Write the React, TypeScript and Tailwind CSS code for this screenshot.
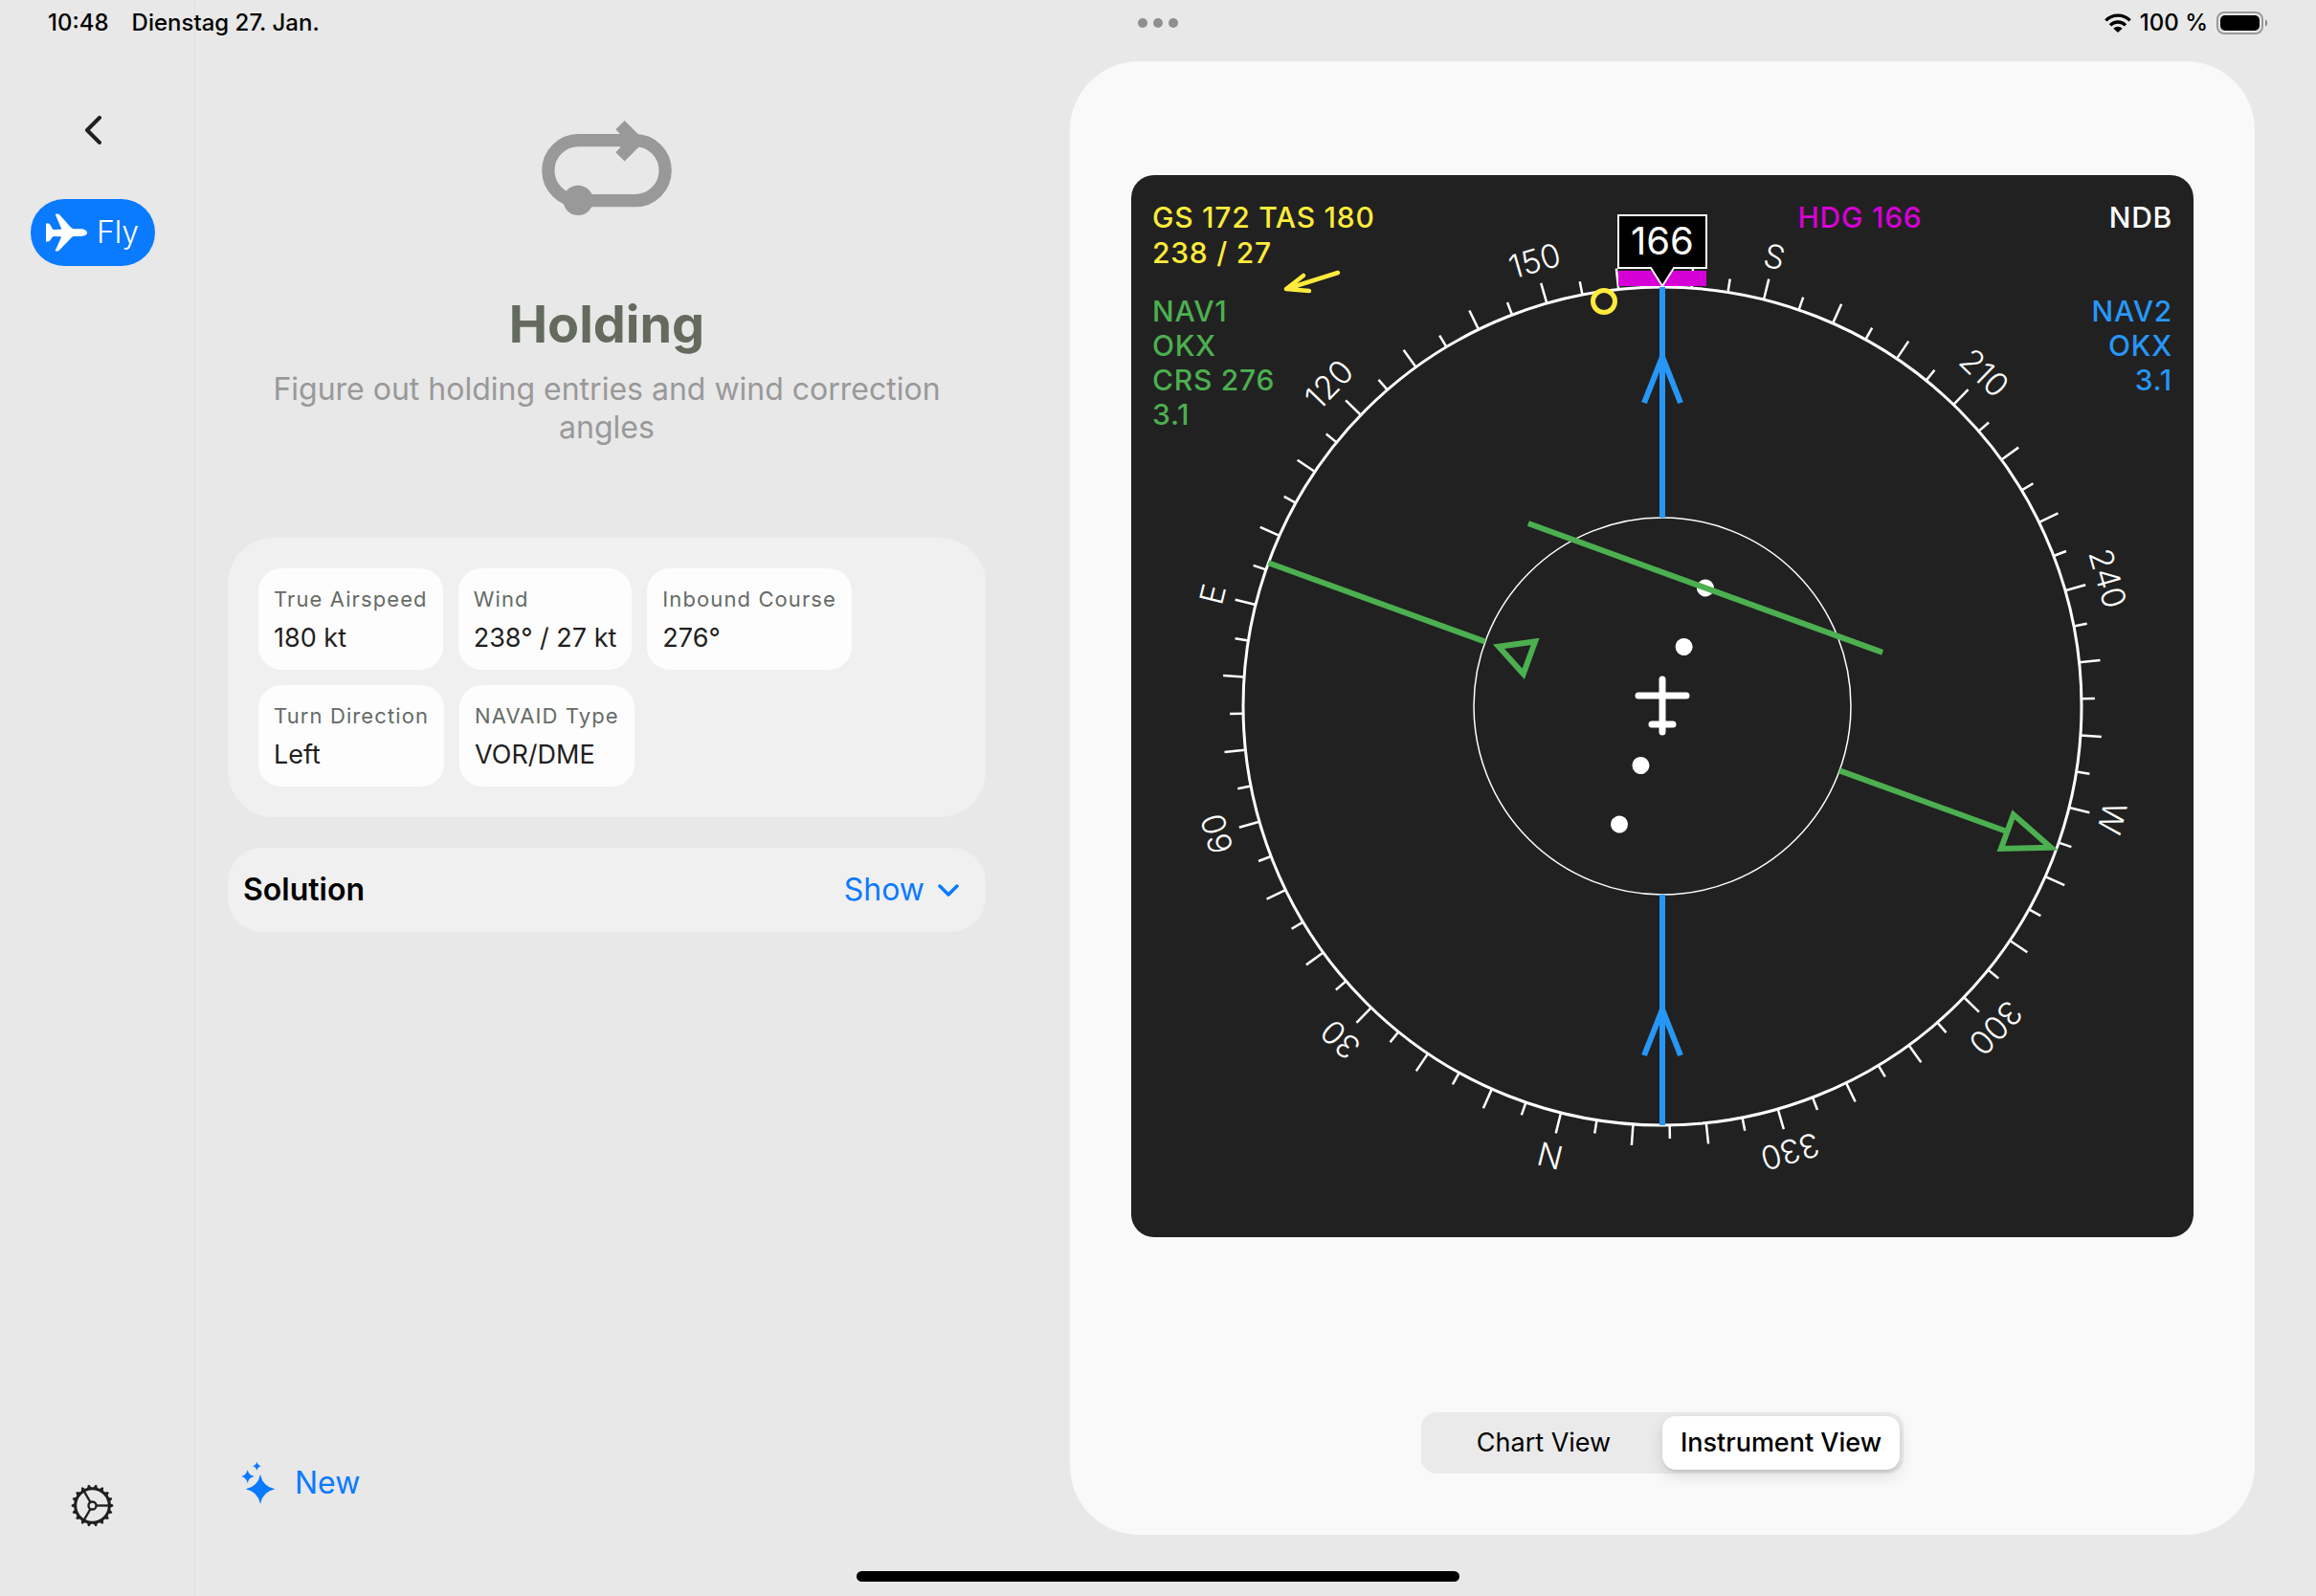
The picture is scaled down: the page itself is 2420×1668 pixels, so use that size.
import { useState } from "react";
import { clsx } from "clsx";

const parameters = [
  { label: "True Airspeed", value: "180 kt" },
  { label: "Wind", value: "238° / 27 kt" },
  { label: "Inbound Course", value: "276°" },
  { label: "Turn Direction", value: "Left" },
  { label: "NAVAID Type", value: "VOR/DME" },
];

const views = ["Chart View", "Instrument View"];

// Instrument geometry, in viewBox units
const C = 555;
const OUTER_R = 438;
const INNER_R = 197;
const HEADING = 166;
const COURSE = 276;

const roseLabels: Record<number, string> = { 0: "N", 90: "E", 180: "S", 270: "W" };

function StatusBar() {
  return (
    <header className="absolute inset-x-0 top-0 flex h-12 items-center justify-between px-[50px] text-2xl font-medium text-black">
      <div className="flex flex-1 gap-6">
        <span>10:48</span>
        <span>Dienstag 27. Jan.</span>
      </div>
      <div className="flex gap-[6px]">
        <span className="size-[10px] rounded-full bg-[#8f8f8f]" />
        <span className="size-[10px] rounded-full bg-[#8f8f8f]" />
        <span className="size-[10px] rounded-full bg-[#8f8f8f]" />
      </div>
      <div className="flex flex-1 items-center justify-end gap-[9px]">
        <svg className="h-5 w-7" viewBox="0 0 84 60" fill="none" stroke="#000" strokeWidth="10">
          <path d="M4 22a54 54 0 0 1 76 0" />
          <path d="M18 37a34 34 0 0 1 48 0" />
          <path d="M42 60 28 47a20 20 0 0 1 28 0z" fill="#000" stroke="none" />
        </svg>
        <span>100 %</span>
        <svg className="h-6 w-[54px]" viewBox="0 0 54 24" fill="none">
          <rect x="1" y="1" width="47" height="22" rx="7" stroke="#9a9a9a" strokeWidth="2" />
          <rect x="4" y="4" width="41" height="16" rx="5" fill="#000" />
          <path d="M51 8.500c3 1 3 6 0 7z" fill="#8a8a8a" />
        </svg>
      </div>
    </header>
  );
}

function PlaneIcon() {
  return (
    <svg className="h-10 w-[43px]" viewBox="147 668 130 120" fill="currentColor">
      <path d="M277 729c0 6-8 11-20 11h-20c-5 0-8 2-10 5l-37 38q-3 4-8 4h-3q-3 0-2-3l18-40q1-3-2-3l-20-1q-4 0-6 3l-7 10q-2 4-6 4h-7v-58h7q4 0 6 4l7 12q2 4 6 4l20-1q4 0 2-4l-17-40q-2-5 2-5h3q5 0 8 4l33 37q6 7 14 7h19c12 0 20 6 20 12z" />
    </svg>
  );
}

function GearIcon() {
  const teeth = Array.from({ length: 18 }, (_, i) => i * 20);
  return (
    <svg className="size-[45px]" viewBox="-67 -67 134 134" fill="none" stroke="currentColor">
      <circle r="53" strokeWidth="9" />
      <circle r="12" strokeWidth="7" />
      {[0, 120, 240].map((a) => (
        <path key={a} d="M13 0H52" strokeWidth="7" transform={`rotate(${a})`} />
      ))}
      {teeth.map((a) => (
        <path key={a} d="M55-7 64-3q3 3 0 6L55 7z" fill="currentColor" stroke="none" transform={`rotate(${a})`} />
      ))}
    </svg>
  );
}

function star(x: number, y: number, r: number) {
  const k = r * 0.17;
  return `M${x} ${y - r}Q${x + k} ${y - k} ${x + r} ${y}Q${x + k} ${y + k} ${x} ${y + r}Q${x - k} ${y + k} ${x - r} ${y}Q${x - k} ${y - k} ${x} ${y - r}z`;
}

function SparklesIcon() {
  return (
    <svg className="h-11 w-9" viewBox="755 141 108 132" fill="currentColor">
      <path d={star(815, 226, 46)} />
      <path d={star(775, 186, 21)} />
      <path d={star(804, 154, 14)} />
    </svg>
  );
}

function HoldingIcon() {
  return (
    <svg className="h-[99px] w-[136px] text-[#999999]" viewBox="138 78 408 298">
      <rect x="158" y="140" width="368" height="190" rx="95" fill="none" stroke="currentColor" strokeWidth="40" />
      <circle cx="252" cy="329" r="47" fill="currentColor" />
      <path d="M398 78l64 64-64 64-28-28 14-14v-44l-14-14z" fill="currentColor" />
    </svg>
  );
}

function Sidebar() {
  return (
    <nav className="flex w-[204px] shrink-0 flex-col items-center border-r border-[#dedede] pb-[72px] pr-[10px] pt-[114px] text-[#1f1f1f]">
      <button type="button" aria-label="Back" className="flex size-11 items-center justify-center">
        <svg className="h-[30px] w-[18px]" viewBox="0 0 18 30" fill="none" stroke="currentColor" strokeWidth="4" strokeLinecap="round" strokeLinejoin="round">
          <path d="M16 2 3 15l13 13" />
        </svg>
      </button>
      <button
        type="button"
        className="mt-[50px] flex h-[70px] w-[130px] items-center justify-center gap-[10px] rounded-full bg-[#0a7aff] text-[32px] font-light text-white"
      >
        <PlaneIcon />
        Fly
      </button>
      <button type="button" aria-label="Settings" className="mt-auto">
        <GearIcon />
      </button>
    </nav>
  );
}

function HoldingPanel() {
  const [open, setOpen] = useState(false);

  return (
    <section className="flex flex-col pb-24 pt-[126px]">
      <div className="flex flex-col items-center text-center">
        <HoldingIcon />
        <h1 className="mt-20 text-[54px] font-bold leading-[68px] text-[#646a5e]">Holding</h1>
        <p className="mt-[14px] text-[32px] font-normal leading-10 text-[#999999]">
          Figure out holding entries and wind correction angles
        </p>
      </div>

      <dl className="mt-[95px] flex flex-wrap gap-4 rounded-[48px] bg-[#f0f0f0] p-8">
        {parameters.map((p) => (
          <div key={p.label} className="flex flex-col gap-[6px] rounded-3xl bg-[#fdfdfd] px-4 pb-[14px] pt-4">
            <dt className="text-[22px] leading-8 tracking-wider text-[#666b66]">{p.label}</dt>
            <dd className="text-[27px] leading-[38px] text-[#1f1f1f]">{p.value}</dd>
          </div>
        ))}
      </dl>

      <div className="mt-8 flex h-[88px] items-center justify-between rounded-[36px] bg-[#f0f0f0] pl-4 pr-7">
        <h2 className="text-[32px] font-semibold text-black">Solution</h2>
        <button
          type="button"
          aria-expanded={open}
          onClick={() => setOpen(!open)}
          className="flex items-center gap-[14px] text-[32px] text-[#0a7aff]"
        >
          Show
          <svg className="h-[13px] w-[22px]" viewBox="0 0 22 13" fill="none" stroke="currentColor" strokeWidth="3.500" strokeLinecap="round" strokeLinejoin="round">
            <path d="M2 2l9 9 9-9" />
          </svg>
        </button>
      </div>

      <button type="button" className="mt-auto flex items-center gap-5 self-start pl-[14px] text-[32px] leading-[44px] text-[#0a7aff]">
        <SparklesIcon />
        New
      </button>
    </section>
  );
}

function CompassRose() {
  const ticks = Array.from({ length: 72 }, (_, i) => i * 5);
  return (
    <g>
      <circle cx={C} cy={C} r={OUTER_R} fill="none" stroke="#fff" strokeWidth="3" />
      <circle cx={C} cy={C} r={INNER_R} fill="none" stroke="#fff" strokeWidth="1.500" />
      {ticks.map((deg) => (
        <g key={deg} transform={`rotate(${deg - HEADING} ${C} ${C})`}>
          <path d={`M${C} ${C - OUTER_R}v${deg % 10 === 0 ? -22 : -14}`} stroke="#fff" strokeWidth="2.500" />
          {deg % 30 === 0 && (
            <text x={C} y={C - 472} textAnchor="middle" fontSize="34" fontWeight="300" fill="#fff">
              {roseLabels[deg] ?? deg}
            </text>
          )}
        </g>
      ))}
    </g>
  );
}

function BearingNeedle() {
  return (
    <g fill="none" stroke="#2797f7" strokeWidth="6">
      <path d="M555 117V358M555 752V993" />
      <path d="M536 238 555 190 574 238M536 920 555 872 574 920" />
    </g>
  );
}

function CourseNeedle() {
  return (
    <g transform={`translate(${C} ${C}) rotate(${COURSE - HEADING})`}>
      {[-131.5, -66, 66, 131.5].map((x) => (
        <circle key={x} cx={x} cy="0" r="9" fill="#fff" />
      ))}
      <g fill="none" stroke="#4caf50" strokeWidth="6">
        <path d="M0 -197V-383M0 197V438" />
        <path d="M0 -432 19 -383.500H-19z" />
        <path d="M0 182 18 148H-18z" />
        <path d="M-131.500 -197V197" />
      </g>
    </g>
  );
}

function Instrument() {
  return (
    <div className="relative w-full overflow-hidden rounded-3xl bg-[#212121]">
      <svg className="block w-full" viewBox="0 0 1110 1110" role="img" aria-label="Heading indicator">
        <CompassRose />
        <CourseNeedle />
        <path d="M530 544H580M544 574H566M555 527V582" stroke="#fff" strokeWidth="7" strokeLinecap="round" />

        {/* heading bug */}
        <path d="M509 100H601V116H509z" fill="#d500d5" />
        <path d="M509 42H601V97H567L555 116 543 97H509z" fill="#000" stroke="#fff" strokeWidth="2" />
        <text x={C} y="83" textAnchor="middle" fontSize="40" fill="#fff">
          {HEADING}
        </text>
        <BearingNeedle />

        {/* track and wind */}
        <circle cx="494" cy="132" r="11.500" fill="none" stroke="#ffeb3b" strokeWidth="5" />
        <path d="M216 102 162 119M180 105 162 119 186 121" fill="none" stroke="#ffeb3b" strokeWidth="4.500" strokeLinecap="round" strokeLinejoin="round" />
      </svg>

      <div className="absolute inset-x-0 top-0 flex justify-between px-[22px] pt-[26px] text-[30px] font-medium leading-[37px] tracking-wide">
        <div>
          <p className="text-[#ffeb3b]">GS 172 TAS 180</p>
          <p className="text-[#ffeb3b]">238 / 27</p>
          <div className="mt-6 leading-9 text-[#4caf50]">
            <p>NAV1</p>
            <p>OKX</p>
            <p>CRS 276</p>
            <p>3.1</p>
          </div>
        </div>
        <p className="ml-auto mr-[177px] text-[#d500d5]">HDG 166</p>
        <div className="text-right">
          <p className="text-white">NDB</p>
          <div className="mt-[61px] leading-9 text-[#2797f7]">
            <p>NAV2</p>
            <p>OKX</p>
            <p>3.1</p>
          </div>
        </div>
      </div>
    </div>
  );
}

function ViewSwitch() {
  const [view, setView] = useState("Instrument View");
  return (
    <div className="grid h-16 w-[504px] grid-cols-2 rounded-2xl bg-[#eaeaea] p-1 text-[27px] text-black">
      {views.map((v) => (
        <button
          key={v}
          type="button"
          aria-pressed={view === v}
          onClick={() => setView(v)}
          className={clsx(
            "rounded-[14px]",
            view === v && "bg-white font-medium shadow-[0_6px_16px_rgba(0,0,0,0.12),0_2px_2px_rgba(0,0,0,0.08)]"
          )}
        >
          {v}
        </button>
      ))}
    </div>
  );
}

export default function App() {
  return (
    <div className="relative flex min-h-screen bg-[#e8e8e8] font-['Inter',sans-serif]">
      <Sidebar />
      <main className="grid flex-1 grid-cols-[792fr_1238fr] gap-[88px] pl-[34px] pr-16">
        <HoldingPanel />
        <section className="my-16 flex flex-col items-center gap-16 rounded-[72px] bg-[#f9f9f9] px-16 pb-16">
          <div className="flex w-full flex-1 items-center">
            <Instrument />
          </div>
          <ViewSwitch />
        </section>
      </main>
      <StatusBar />
      <div className="absolute bottom-[15px] left-1/2 h-[11px] w-[630px] -translate-x-1/2 rounded-full bg-black" />
    </div>
  );
}
